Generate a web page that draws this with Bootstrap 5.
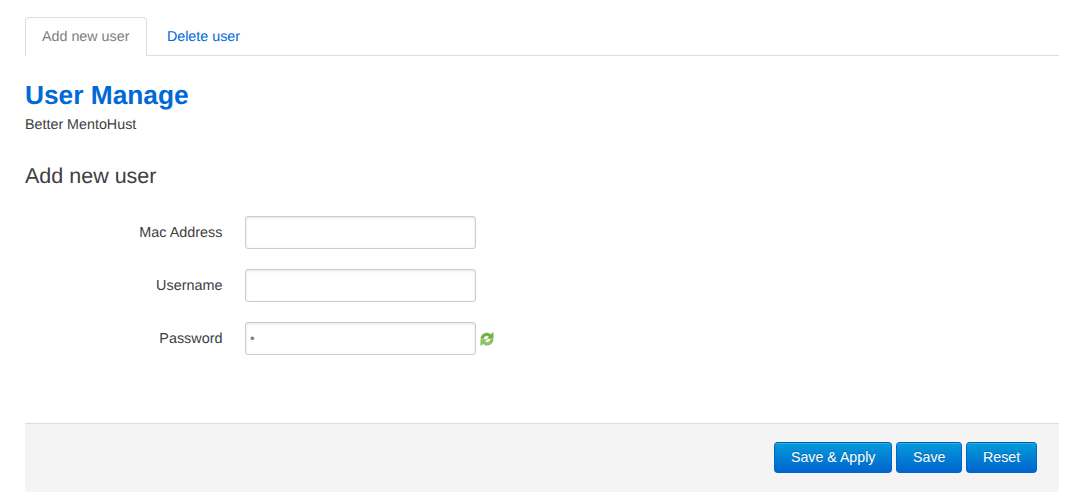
<!DOCTYPE html>
<html lang="en">
<head>
<meta charset="utf-8">
<title>User Manage</title>
<link href="https://cdn.jsdelivr.net/npm/bootstrap@5.3.0/dist/css/bootstrap.min.css" rel="stylesheet">
<style>
html, body { height: 100%; }
body { font-family: "Liberation Sans", Arial, sans-serif; font-size: 14.3px; line-height: 20px; color: #404040; background: #fff; padding: 17px 10px 0 25px; text-rendering: geometricPrecision; }
.cbi-tabs { border-bottom: 1px solid #ddd; height: 39px; margin: 0 0 21px; }
.cbi-tabs .nav-link { font-size: 14.3px; line-height: 20px; height: 39px; padding: 9px 17px 9px 16px; border-radius: 4px 4px 0 0; color: #0069d6; border: 1px solid transparent; border-bottom: 0; margin: 0 0 0 2.5px; background: none; }
.cbi-tabs .nav-link.active { color: #808080; background: #fff; border: 1px solid #ddd; border-bottom: 1px solid #fff; height: 39px; margin: 0; }
.cbi-title { font-size: 26.3px; line-height: 36px; font-weight: 700; color: #0069d6; margin: 0 0 2px; }
.cbi-desc { font-size: 14.3px; line-height: 20px; margin: 0 0 23px; }
.cbi-section-title { font-size: 21.5px; line-height: 36px; font-weight: 400; color: #404040; margin: 0 0 22px; }
.cbi-row { display: flex; align-items: center; height: 33px; margin-bottom: 20px; }
.cbi-label { width: 197.5px; text-align: right; margin: 0 22.5px 0 0; padding: 0; font-size: 14.4px; line-height: 20px; color: #404040; }
.cbi-input { width: 231px; height: 33px; padding: 4px; font-size: 13px; font-family: inherit; line-height: 20px; color: #808080; border: 1px solid #ccc; border-radius: 3px; box-shadow: inset 0 1px 3px rgba(0,0,0,.1); }
.cbi-input:focus { outline: 0; }
.cbi-refresh { margin-left: 3px; flex: none; }
.cbi-actions { margin-top: 68px; height: 69px; background: #f4f4f4; border-top: 1px solid #ddd; border-radius: 0 0 4px 4px; padding: 18px 22px 0 0; }
.cbi-btn { height: 31px; padding: 0 15.85px; font-size: 14.2px; line-height: 29px; color: #fff; text-shadow: 0 -1px 0 rgba(0,0,0,.2); background: linear-gradient(#049cdb, #0064cd); border: 1px solid #0064cd; border-top-color: #0258b0; border-radius: 4px; box-shadow: inset 0 1px 0 rgba(255,255,255,.2); --bs-btn-hover-color: #fff; }
</style>
</head>
<body>
<ul class="nav cbi-tabs">
  <li class="nav-item"><a class="nav-link active" href="#">Add new user</a></li>
  <li class="nav-item"><a class="nav-link" href="#">Delete user</a></li>
</ul>
<h2 class="cbi-title">User Manage</h2>
<div class="cbi-desc">Better MentoHust</div>
<h3 class="cbi-section-title">Add new user</h3>
<form>
  <div class="cbi-row">
    <label class="cbi-label" for="mac">Mac Address</label>
    <input class="cbi-input" id="mac" type="text">
  </div>
  <div class="cbi-row">
    <label class="cbi-label" for="user">Username</label>
    <input class="cbi-input" id="user" type="text">
  </div>
  <div class="cbi-row">
    <label class="cbi-label" for="pass">Password</label>
    <input class="cbi-input" id="pass" type="password" value="x">
    <svg class="cbi-refresh" width="16" height="16" viewBox="0 0 16 16" aria-hidden="true">
      <path d="M1.800 7.600C2 4.200 4.600 2 7.800 2c1.700 0 3 .6 4.100 1.500L14.200 1.600v6H8.200l2-2C9.500 5 8.800 4.700 7.900 4.700 6.100 4.700 5 5.800 4.700 7.600z" fill="#6fb33f" stroke="#5fa336" stroke-width=".4"/>
      <path d="M14.200 8.600C14 12 11.400 14.200 8.200 14.200c-1.700 0-3-.6-4.100-1.500L1.800 14.600v-6h6l-2 2c.7.600 1.400.9 2.300.9 1.800 0 2.900-1.100 3.200-2.900z" fill="#8cc660" stroke="#5fa336" stroke-width=".4"/>
    </svg>
  </div>
  <div class="cbi-actions d-flex justify-content-end gap-1">
    <button type="button" class="btn cbi-btn">Save &amp; Apply</button>
    <button type="button" class="btn cbi-btn">Save</button>
    <button type="button" class="btn cbi-btn">Reset</button>
  </div>
</form>
</body>
</html>
